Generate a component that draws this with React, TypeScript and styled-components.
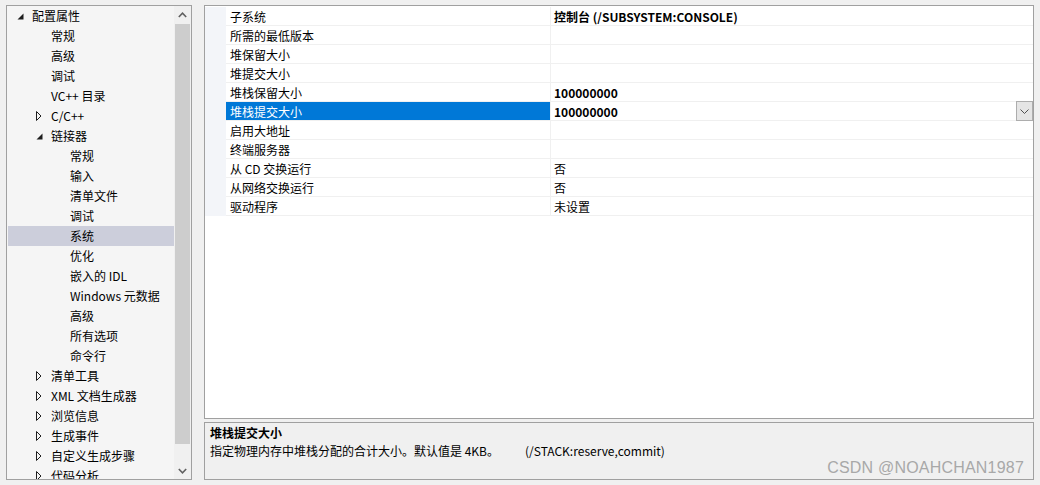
import React from "react";
import styled, { createGlobalStyle } from "styled-components";

const GlobalStyle = createGlobalStyle`
  html, body {
    margin: 0;
    padding: 0;
    background: #f0f0f0;
  }
  body {
    font-family: "Microsoft YaHei UI", "Segoe UI", "Noto Sans CJK SC", sans-serif;
    font-size: 12px;
    color: #000;
  }
`;

const Page = styled.div`
  position: relative;
  box-sizing: border-box;
  width: 1040px;
  height: 485px;
  padding: 5px 0 5px 6px;
  display: flex;
  gap: 12px;
`;

/* ---------- category tree ---------- */

const TreePanel = styled.div`
  box-sizing: border-box;
  width: 186px;
  height: 475px;
  border: 1px solid #a0a0a0;
  background: #f5f5f5;
  display: flex;
`;

const TreeList = styled.div`
  flex: 1;
  overflow: hidden;
  padding-left: 1px;
`;

const TreeRow = styled.div<{ $level: number; $selected?: boolean }>`
  height: 20px;
  display: flex;
  align-items: center;
  padding-left: ${(p) => 9 + p.$level * 19}px;
  background: ${(p) => (p.$selected ? "#cccedb" : "transparent")};
  white-space: nowrap;
  line-height: 20px;
`;

const Toggle = styled.span`
  flex: none;
  width: 15px;
  height: 20px;
  display: flex;
  align-items: center;
`;

const Scrollbar = styled.div`
  flex: none;
  width: 17px;
  background: #f0f0f0;
  display: flex;
  flex-direction: column;
`;

const ScrollButton = styled.div`
  flex: none;
  height: 17px;
  display: flex;
  align-items: center;
  justify-content: center;
`;

const ScrollTrack = styled.div`
  flex: 1;
  padding: 1px 1px 0;
`;

const ScrollThumb = styled.div<{ $height: number }>`
  height: ${(p) => p.$height}px;
  background: #cdcdcd;
`;

/* ---------- property grid ---------- */

const RightColumn = styled.div`
  width: 830px;
  height: 475px;
  display: flex;
  flex-direction: column;
  gap: 3px;
`;

const Grid = styled.div`
  box-sizing: border-box;
  height: 414px;
  border: 1px solid #a0a0a0;
  background: #fff;
  padding-top: 1px;
`;

const PropRow = styled.div`
  display: grid;
  grid-template-columns: 21px 325px 1fr;
  height: 19px;
`;

const Gutter = styled.div`
  background: #f3f5f9;
`;

const NameCell = styled.div<{ $selected?: boolean }>`
  box-sizing: border-box;
  height: 19px;
  padding: 0 0 0 4px;
  line-height: 19px;
  border-right: 1px solid #f0f0f0;
  border-bottom: 1px solid ${(p) => (p.$selected ? "#f0f0f0" : "#f0f0f0")};
  background: ${(p) => (p.$selected ? "#0078d7" : "#fff")};
  color: ${(p) => (p.$selected ? "#fff" : "#000")};
  white-space: nowrap;
`;

const ValueCell = styled.div<{ $bold?: boolean }>`
  position: relative;
  box-sizing: border-box;
  height: 19px;
  padding-left: 3px;
  line-height: 19px;
  border-bottom: 1px solid #f0f0f0;
  font-weight: ${(p) => (p.$bold ? 700 : 400)};
  white-space: nowrap;
`;

const DropButton = styled.div`
  position: absolute;
  right: 0;
  top: -1px;
  box-sizing: border-box;
  width: 17px;
  height: 20px;
  border: 1px solid #adadad;
  background: #e5e5e5;
  display: flex;
  align-items: center;
  justify-content: center;
`;

/* ---------- description ---------- */

const Description = styled.div`
  box-sizing: border-box;
  height: 58px;
  border: 1px solid #a0a0a0;
  background: #f0f0f0;
  padding: 1px 5px;
  line-height: 18px;
`;

const DescTitle = styled.div`
  font-weight: 700;
`;

const DescText = styled.div`
  white-space: nowrap;
`;

const SwitchName = styled.span`
  margin-left: 26px;
`;

const Watermark = styled.div`
  position: absolute;
  top: 460px;
  right: 16px;
  font-family: "Liberation Sans", Arial, sans-serif;
  font-size: 16px;
  line-height: 16px;
  color: #a8a8a8;
  letter-spacing: 0.2px;
`;

/* ---------- glyphs ---------- */

const Expanded = () => (
  <svg width="7" height="7" viewBox="0 0 7 7" style={{ marginTop: 1 }}>
    <polygon points="6.5,0.5 6.5,6.5 0.5,6.5" fill="#1e1e1e" />
  </svg>
);

const Collapsed = () => (
  <svg width="6" height="10" viewBox="0 0 6 10">
    <polygon points="0.5,0.5 5,5 0.5,9.5" fill="none" stroke="#1e1e1e" strokeWidth="1" />
  </svg>
);

const Chevron = ({ up }: { up?: boolean }) => (
  <svg width="9" height="6" viewBox="0 0 9 6">
    <polyline
      points={up ? "0.8,5 4.5,1.2 8.2,5" : "0.8,1 4.5,4.8 8.2,1"}
      fill="none"
      stroke="#606060"
      strokeWidth="1.6"
    />
  </svg>
);

const ComboChevron = () => (
  <svg width="9" height="5" viewBox="0 0 9 5">
    <polyline points="0.5,0.5 4.5,4.5 8.5,0.5" fill="none" stroke="#505050" strokeWidth="1" />
  </svg>
);

/* ---------- data ---------- */

type Node = { label: string; level: number; state?: "open" | "closed"; selected?: boolean };

const tree: Node[] = [
  { label: "配置属性", level: 0, state: "open" },
  { label: "常规", level: 1 },
  { label: "高级", level: 1 },
  { label: "调试", level: 1 },
  { label: "VC++ 目录", level: 1 },
  { label: "C/C++", level: 1, state: "closed" },
  { label: "链接器", level: 1, state: "open" },
  { label: "常规", level: 2 },
  { label: "输入", level: 2 },
  { label: "清单文件", level: 2 },
  { label: "调试", level: 2 },
  { label: "系统", level: 2, selected: true },
  { label: "优化", level: 2 },
  { label: "嵌入的 IDL", level: 2 },
  { label: "Windows 元数据", level: 2 },
  { label: "高级", level: 2 },
  { label: "所有选项", level: 2 },
  { label: "命令行", level: 2 },
  { label: "清单工具", level: 1, state: "closed" },
  { label: "XML 文档生成器", level: 1, state: "closed" },
  { label: "浏览信息", level: 1, state: "closed" },
  { label: "生成事件", level: 1, state: "closed" },
  { label: "自定义生成步骤", level: 1, state: "closed" },
  { label: "代码分析", level: 1, state: "closed" },
];

type Prop = { name: string; value: string; bold?: boolean; selected?: boolean };

const props: Prop[] = [
  { name: "子系统", value: "控制台 (/SUBSYSTEM:CONSOLE)", bold: true },
  { name: "所需的最低版本", value: "" },
  { name: "堆保留大小", value: "" },
  { name: "堆提交大小", value: "" },
  { name: "堆栈保留大小", value: "100000000", bold: true },
  { name: "堆栈提交大小", value: "100000000", bold: true, selected: true },
  { name: "启用大地址", value: "" },
  { name: "终端服务器", value: "" },
  { name: "从 CD 交换运行", value: "否" },
  { name: "从网络交换运行", value: "否" },
  { name: "驱动程序", value: "未设置" },
];

export default function App() {
  return (
    <>
      <GlobalStyle />
      <Page>
        <TreePanel>
          <TreeList>
            {tree.map((n, i) => (
              <TreeRow key={i} $level={n.level} $selected={n.selected}>
                <Toggle>
                  {n.state === "open" && <Expanded />}
                  {n.state === "closed" && <Collapsed />}
                </Toggle>
                {n.label}
              </TreeRow>
            ))}
          </TreeList>
          <Scrollbar>
            <ScrollButton>
              <Chevron up />
            </ScrollButton>
            <ScrollTrack>
              <ScrollThumb $height={420} />
            </ScrollTrack>
            <ScrollButton>
              <Chevron />
            </ScrollButton>
          </Scrollbar>
        </TreePanel>

        <RightColumn>
          <Grid>
            {props.map((p, i) => (
              <PropRow key={i}>
                <Gutter />
                <NameCell $selected={p.selected}>{p.name}</NameCell>
                <ValueCell $bold={p.bold}>
                  {p.value}
                  {p.selected && (
                    <DropButton>
                      <ComboChevron />
                    </DropButton>
                  )}
                </ValueCell>
              </PropRow>
            ))}
          </Grid>
          <Description>
            <DescTitle>堆栈提交大小</DescTitle>
            <DescText>
              指定物理内存中堆栈分配的合计大小。默认值是 4KB。
              <SwitchName>(/STACK:reserve,commit)</SwitchName>
            </DescText>
          </Description>
        </RightColumn>
        <Watermark>CSDN @NOAHCHAN1987</Watermark>
      </Page>
    </>
  );
}
